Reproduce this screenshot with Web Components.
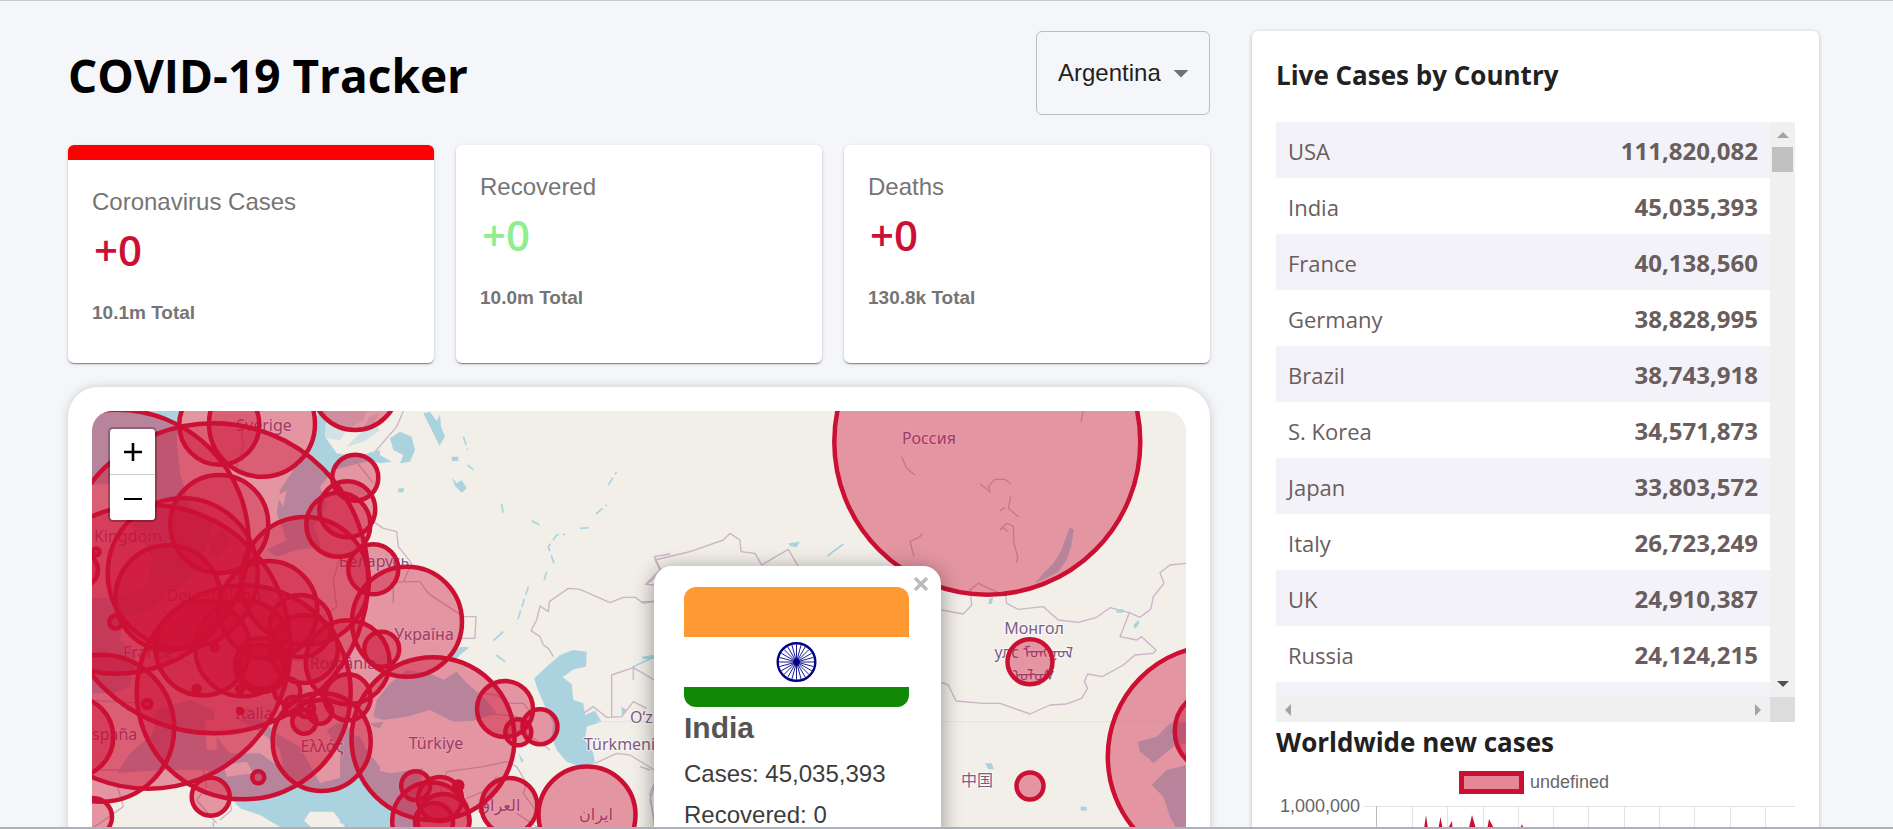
<!DOCTYPE html>
<html lang="en">
<head>
<meta charset="utf-8">
<title>COVID-19 Tracker</title>
<style>
  html, body { margin: 0; background: #f5f6fa; }
</style>
</head>
<body>
<covid-app></covid-app>

<script>
const define = (name, html, setup) => {
  const tpl = document.createElement('template');
  tpl.innerHTML = html;
  customElements.define(name, class extends HTMLElement {
    connectedCallback() {
      if (this.shadowRoot) return;
      this.attachShadow({ mode: 'open' }).append(tpl.content.cloneNode(true));
      if (setup) setup(this, this.shadowRoot);
    }
  });
};

/* Drop-down used to choose a country */
define('country-select', `
<style>
  :host { display: block; position: relative; }
  select { appearance: none; box-sizing: border-box; height: 84px; width: 174px; padding: 0 48px 0 21px;
    border: 1px solid #bcbdc1; border-radius: 6px; background: transparent; color: #1f1f20;
    font: 24px/36px "Liberation Sans", Arial, sans-serif; }
  svg { position: absolute; right: 21px; top: 39px; pointer-events: none; }
</style>
<select aria-label="Country"><option>Argentina</option></select>
<svg width="16" height="8" viewBox="0 0 16 8"><path d="M.5 0h15L8 7.5z" fill="#717276"/></svg>
`);

/* Summary card */
define('info-box', `
<style>
  :host { display: block; box-sizing: border-box; padding: 24px 24px 32px; border-radius: 6px; background: #fff;
    font-family: "Liberation Sans", Arial, sans-serif; color: #757575;
    box-shadow: 0 2px 1px -1px rgba(0,0,0,.3), 0 1px 2px rgba(0,0,0,.2), 0 1px 4px rgba(0,0,0,.1); }
  :host([selected]) { border-top: 15px solid #f00; }
  p, h2 { margin: 0; }
  .label { font-size: 24px; line-height: 36px; }
  h2 { padding-left: 2px; font: 600 42px/60px "Open Sans", sans-serif; color: #cc1034; }
  :host([good]) h2 { color: #90ee90; }
  .total { margin-top: 15px; font-size: 19px; line-height: 36px; font-weight: 700; }
</style>
<p class="label"><slot name="label"></slot></p>
<h2><slot></slot></h2>
<p class="total"><slot name="total"></slot></p>
`);

/* Country popup on the map */
define('map-popup', `
<style>
  :host { display: block; box-sizing: border-box; width: 287px; height: 400px; padding: 21px 32px 0 30px; background: #fff;
    border-radius: 18px; box-shadow: 0 4px 21px rgba(0,0,0,.4);
    font: 24px/41px "Liberation Sans", Arial, sans-serif; color: #3c3c3c; }
  .flag { display: block; width: 100%; height: 120px; border-radius: 12px; }
  h3 { margin: 0 0 4px; font-size: 30px; line-height: 42px; color: #555; }
  button { position: absolute; right: 8px; top: 6px; width: 24px; height: 24px; padding: 5px; border: 0; background: none; }
  button svg { display: block; }
</style>
<button aria-label="Close popup"><svg width="14" height="14" viewBox="0 0 14 14"><path d="M1 1l12 12M13 1L1 13" stroke="#bbb" stroke-width="3.4"/></svg></button>
<svg class="flag" viewBox="0 0 225 120" preserveAspectRatio="none">
  <path fill="#f93" d="M0 0h225v50H0z"/><path fill="#fff" d="M0 50h225v50H0z"/><path fill="#128807" d="M0 100h225v20H0z"/>
  <g transform="translate(112.500 75)" stroke="#008" fill="none">
    <circle r="18.800" stroke-width="2.400"/><circle r="3.200" fill="#008" stroke="none"/>
    <g id="spokes" stroke-width=".9"></g>
  </g>
</svg>
<h3><slot name="name"></slot></h3>
<slot></slot>
`, (host, root) => {
  let d = '';
  for (let i = 0; i < 24; i++) {
    const a = i * Math.PI / 12;
    d += `M0 0L${17.5 * Math.cos(a)} ${17.5 * Math.sin(a)}`;
  }
  root.querySelector('#spokes').innerHTML = `<path d="${d}"/>`;
});

/* Map with one circle per country: [x, y, radius] */
const CIRCLES = [
  [116.7,541.7,132],[213.3,578.3,155],[148.3,646.7,142],[243.7,692.3,107],[100.7,728.3,73.5],[73.3,737,40],
  [219.3,424.7,40],[262,423.7,53],[219.3,524,49],[182.7,573.3,75],[168,597.7,52.5],[305,581,64],[268.3,610,49],
  [243.3,648.3,48],[202.7,648.3,47],[347.7,662.3,42],[300.7,626,31],[304,649,34],[262,665,27],[261.7,667,22],
  [287.3,691,13],[304.3,721.7,12],[320,711.7,12],[306,709,8],[293,706,9],[347.7,697.3,23],[321.7,742,49],
  [258.3,777.3,6],[210.7,796.7,19],[93,817,19],[147.3,704,4],[196.7,689,3],[240,689,3],[240,711,2],[215,647.5,3],
  [115.7,622,6.5],[81,570,17],[96,552,3.5],[355,387,43],[355.3,477.7,23],[347.3,509.3,28],[338.3,524.7,32],
  [373.3,569.3,25],[407,621.7,55],[381.7,649.3,17.5],[433,738.7,81.5],[505,709,28],[518.3,732.3,13],[540,726.7,17.5],
  [509.3,806,28],[587,815,48.5],[415.7,785.7,14.5],[458.3,785.5,4],[440,799,22],[430.7,820.7,38.5],[434,822,19],
  [443.5,820,26],[987.3,441.7,153],[1030,661.7,22.5],[1030,786,13.5],[1219.3,756.7,111.5],[1215.7,731,41]
];
define('covid-map', `
<style>
  :host { display: block; padding: 24px; border-radius: 30px; background: #fff; box-shadow: 0 0 12px -2px rgba(0,0,0,.25); }
  .map { position: relative; height: 750px; border-radius: 20px; overflow: hidden; background: #f2efe9; }
  .map > svg { display: block; width: 100%; height: 100%; }
  .water { fill: #aad3df; } .land { fill: #f2efe9; }
  .river { fill: none; stroke: #aad3df; stroke-width: 5; stroke-linejoin: round; }
  .border { fill: none; stroke: #cbb4c6; stroke-width: 4; stroke-linejoin: round; }
  .names { font: 16px "Noto Sans", "DejaVu Sans", "Noto Sans CJK SC", sans-serif; fill: #7d5c86; text-anchor: middle;
    stroke: #fff; stroke-opacity: .6; stroke-width: 2; paint-order: stroke; }
  .names .from { text-anchor: start; }
  .cases { fill: #cc1034; fill-opacity: .4; stroke: #cc1034; stroke-width: 4.500; }
  .zoom { position: absolute; left: 16px; top: 16px; display: grid; border: 2px solid rgba(0,0,0,.25); border-radius: 5px; background: #fff; background-clip: padding-box; }
  .zoom button { display: grid; place-items: center; width: 45px; height: 45px; padding: 0; border: 0; background: none; }
  .zoom button:first-child { height: 46px; border-bottom: 1px solid #ccc; }
  ::slotted(map-popup) { position: absolute; left: 562px; top: 155px; }
</style>
<div class="map">
  <svg viewBox="92 411 1094 750" preserveAspectRatio="xMidYMin slice">
    <!-- western Europe -->
    <g transform="translate(80 400) scale(.33333)">
      <path class="water" d="M0 0H300L290 120 300 220 330 320 400 360 380 440 345 520 300 560 250 600 190 640 130 650 120 720 170 760 150 860 100 880 0 880z"/>
      <path class="land" d="M0 260L90 250 130 300 130 350 180 400 220 480 200 560 100 590 0 600z"/>
      <path class="water" d="M385 410L430 390 450 430 420 470 390 470zM560 450L620 420 590 340 600 270 660 180 700 120 715 30H740L735 110 770 160 830 170 900 150 900 175 760 210 720 260 740 320 700 380 720 440 650 450 590 470z"/>
      <path class="water" opacity=".45" d="M740 30H860L850 60 800 90 780 120 735 115z"/>
      <path class="land" d="M590 290L620 270 610 320zM570 350L580 330 575 390zM750 250L780 240 790 265 760 280z"/>
      <path class="water" d="M110 1120L150 1060 220 1000 230 930 330 900 400 930 410 1010 450 1060 540 1060 610 1110 600 1050 560 1010 480 960 500 920 590 1000 660 1040 720 1150 790 1130 780 1060 740 990 790 960 860 1050 900 1100V1287H800L760 1235 690 1235 672 1262 700 1287H610L540 1245 480 1225 450 1190 420 1150 380 1110 250 1110z"/>
      <path class="land" d="M375 960L410 960 410 1050 380 1050zM430 1095L500 1085 520 1120 440 1130z"/>
      <path class="border" d="M480 60L490 140 470 200M710 400L720 450 780 470 760 540 770 620 730 650M810 160L880 250M110 1150L130 1220 60 1270 30 1287M370 1110L380 1160 350 1200 410 1270M450 1200L455 1230 420 1260M800 1287V1265M400 1287L400 1265M240 620L300 690 290 760 340 800M420 560L540 560 600 620M640 780L760 790M170 1110L60 1110M20 900L200 910"/>
    </g>
    <!-- Russia, Black Sea, Caspian -->
    <g transform="translate(340 400) scale(.33333)">
      <path class="water" d="M150 115L180 95 215 110 225 150 210 185 180 190 190 165 160 150zM250 40L270 36 290 62 300 45 303 80 315 110 298 137 280 100zM335 232L350 250 365 240 380 265 365 278 345 258zM335 170L355 170 355 183 335 183zM175 265L193 265 190 277 175 277zM90 155L120 165 155 185 120 190 85 180z"/>
      <path class="water" d="M90 50L120 40 100 70 120 90 70 125 20 140 60 100z" opacity=".5"/>
      <path class="water" d="M100 950L110 900 150 850 200 810 270 820 310 840 350 815 380 850 440 900 470 940 400 962 340 965 270 930 200 950 130 960zM325 780L360 740 388 742 360 765 340 785zM90 970L130 965 120 985 100 980z"/>
      <path class="water" d="M660 765L700 750 740 755 738 800 700 808 668 832 695 852 700 900 730 910 735 945 765 932 785 965 740 980 735 1020 760 1060 765 1090 720 1100 680 1085 650 1050 635 1010 640 970 615 920 590 860 583 835 620 800z"/>
      <path class="water" d="M0 1000L60 1010 110 1110 150 1120 250 1105 240 1160 220 1287H90L60 1270H0z"/>
      <path class="water" d="M535 1060L550 1080 545 1090zM845 920L860 930 845 945z"/>
      <path class="river" d="M370 110L383 150M383 195L400 210M485 312L490 345M575 362L600 375M642 490L625 440 650 405 675 403M720 385L752 383M768 342L800 315M805 255L830 215M620 515L612 540M565 560L530 670" stroke-dasharray="26 12"/>
      <path class="river" d="M460 722L490 695M468 765L495 785M880 840L880 800 943 770"/>
      <path class="border" d="M190 33L170 80 105 155M100 365L130 385 170 395 175 440 215 490 190 545 150 550M190 545L240 545 265 580 310 610 370 650 408 650 405 715 360 715M640 770L625 745 610 735 600 710 573 692 590 660 600 618 625 635 628 605 685 565 720 568 810 608 850 592 885 592 910 610 945 603M945 555L920 553 965 515 943 470 990 462M815 952V825L880 803 943 840M730 940L760 920 800 952 845 950 880 905 920 925M765 1090L830 1060 870 1065 943 1110M420 880L470 885 500 910 550 910 575 940M440 940L530 950 560 1000 630 1050M320 1115L430 1100 500 1085 530 1100 560 1150 550 1180 590 1235M320 1115L300 1180M470 1130L440 1170 380 1195M943 1150L930 1180 945 1287M530 1240L600 1287M160 550V610"/>
    </g>
    <!-- Central and East Asia -->
    <g transform="translate(640 540) scale(.33333)">
      <path class="border" d="M0 185H45M15 135L60 90 45 60 150 35 250 0 270 -20 300 0 303 35 345 40 365 75 445 28 475 80M0 680L30 690M45 730L30 780 45 850M905 210L970 222 995 195 990 150 1015 130 1080 160M1097 165L1100 190 1135 208 1210 200 1255 240 1315 247 1370 232 1410 203 1468 218 1500 232 1532 208 1540 170 1572 130 1560 98 1590 75 1638 70M1468 218L1440 290 1490 300 1505 290 1548 330 1540 340 1485 345 1450 375 1387 410 1343 402 1333 425 1343 445 1325 475 1280 492 1230 495 1170 522 1080 490 1030 490 948 483 925 435 905 428"/>
      <path class="water" d="M1493 605L1550 590 1590 550 1638 545V610L1600 620 1540 670 1525 655 1500 635zM1638 675L1580 690 1535 735 1570 770 1590 830 1610 867V1000H1800V675z"/>
      <path class="water" d="M1290 -38L1302 -30 1293 20 1280 60 1255 95 1220 115 1185 130 1210 100 1240 70 1265 30 1275 0zM1048 175L1060 172 1055 192 1045 192zM1480 255L1495 240 1498 250 1485 268zM1430 208L1450 208 1448 218 1430 218zM1035 670L1055 670 1062 688 1045 688zM445 10L480 5 470 22 450 18zM1322 800H1340V812H1322zM5 350L40 345 42 357 10 357z"/>
      <path class="river" d="M562 48L610 12"/>
      <path d="M-130 545H1638" stroke="#e6e3dd" stroke-width="3"/>
      <path fill="none" stroke="#b9bccb" stroke-width="4" d="M1020 -168L1050 -145 1045 -160 1065 -182 1095 -182 1113 -168M1112 -130L1105 -95 1135 -70M1080 -88L1095 -98M1080 -30L1100 -50 1120 -42M1085 -40L1105 -25M1120 -42L1122 10 1133 50 1130 68M848 -20L840 -10 810 5 822 50M1323 -355L1330 -390 1355 -400M785 -250L800 -215 825 -195"/>
    </g>
    <g class="names">
      <text x="264" y="431">Sverige</text><text x="128" y="542">Kingdom</text><text x="374" y="567">Беларусь</text>
      <text x="424" y="640">Україна</text><text x="436" y="749">Türkiye</text><text x="148" y="658">France</text>
      <text x="214" y="601">Deutschland</text><text x="343" y="669">România</text><text x="254" y="719">Italia</text>
      <text x="322" y="752">Ελλάς</text><text class="from" x="92" y="740">spaña</text><text x="929" y="444">Россия</text>
      <text x="1034" y="634">Монгол</text><text x="1034" y="658">улс ᠮᠣᠩᠭᠤᠯ</text><text x="1034" y="681">ᠤᠯᠤᠰ</text>
      <text x="977" y="786">中国</text><text x="499" y="811">العراق</text><text x="596" y="820">ایران</text>
      <text class="from" x="630" y="723">Oʻz</text><text class="from" x="584" y="750">Türkmeni</text>
    </g>
    <g class="cases"></g>
  </svg>
  <slot></slot>
  <div class="zoom">
    <button aria-label="Zoom in"><svg width="18" height="18" viewBox="0 0 18 18"><path d="M0 9h18M9 0v18" stroke="#000" stroke-width="2.600"/></svg></button>
    <button aria-label="Zoom out"><svg width="18" height="18" viewBox="0 0 18 18"><path d="M0 10h18" stroke="#000" stroke-width="2.200"/></svg></button>
  </div>
</div>
`, (host, root) => {
  root.querySelector('.cases').innerHTML = CIRCLES.map(([x, y, r]) => `<circle cx="${x}" cy="${y}" r="${r}"/>`).join('');
});

const COUNTRIES = [['USA','111,820,082'],['India','45,035,393'],['France','40,138,560'],['Germany','38,828,995'],
  ['Brazil','38,743,918'],['S. Korea','34,571,873'],['Japan','33,803,572'],['Italy','26,723,249'],['UK','24,910,387'],
  ['Russia','24,124,215'],['','']];
define('cases-table', `
<style>
  :host { display: grid; grid-template: 575px 25px / 1fr 25px; }
  .rows { overflow: hidden; }
  table { width: 100%; border-collapse: collapse; color: #6a5d5d; font: 22px/54px "Open Sans", sans-serif; }
  tr { height: 56px; }
  tr:nth-child(odd) { background: #f3f2f8; }
  td { padding: 2px 12px 0; }
  td + td { text-align: right; font-size: 24px; font-weight: 700; }
  .bar { display: flex; justify-content: space-between; align-items: center; background: #f0f0f0; }
  .v { flex-direction: column; padding: 10px 0; }
  .v div { display: grid; justify-items: center; gap: 9px; }
  .v i { width: 21px; height: 25px; background: #c1c1c1; }
  .h { padding: 0 9px; }
  .corner { background: #dcdcdc; }
  svg { display: block; fill: #a3a3a3; }
</style>
<div class="rows"><table><tbody></tbody></table></div>
<div class="bar v"><div><svg width="12" height="6"><path d="M6 0l6 6H0z"/></svg><i></i></div><svg width="12" height="6"><path fill="#505050" d="M6 6L0 0h12z"/></svg></div>
<div class="bar h"><svg width="6" height="12"><path d="M0 6l6-6v12z"/></svg><svg width="6" height="12"><path d="M6 6L0 0v12z"/></svg></div>
<div class="corner"></div>
`, (host, root) => {
  root.querySelector('tbody').innerHTML = COUNTRIES.map(([n, c]) => `<tr><td>${n}</td><td>${c}</td></tr>`).join('');
});

/* Worldwide chart */
define('line-graph', `
<style>
  :host { display: block; font: 18px/24px "Liberation Sans", Arial, sans-serif; color: #666; }
  .legend { display: flex; justify-content: center; align-items: center; gap: 6px; height: 24px; margin-top: 8px; padding-right: 3px; }
  .legend i { box-sizing: border-box; width: 65px; height: 23px; border: 5px solid #cc1034; background: #e68799; }
  .plot { display: flex; gap: 4px; }
  .axis { width: 84px; text-align: right; }
  .plot svg { flex: 1; min-width: 0; height: 270px; margin-top: 12px; }
</style>
<div class="legend"><i></i><span>undefined</span></div>
<div class="plot">
  <div class="axis">1,000,000</div>
  <svg viewBox="0 0 431 270" preserveAspectRatio="none">
    <path fill="#cc1034" d="M59 30L62 9 65 30zM73 30L76.500 11 80 30zM80 30L88 15 89 30zM103 30L108 9 114 30zM122 30L125 13 134 30zM153 30L158 18 162 30z"/>
    <path stroke="#e3e3e3" stroke-width="1" d="M0 .5H431M48.500 0V270M83.500 0V270M119.500 0V270M154.500 0V270M189.500 0V270M224.500 0V270M260.500 0V270M295.500 0V270M330.500 0V270M366.500 0V270M401.500 0V270"/>
    <path stroke="#b9b9b9" d="M12.500 0V270"/>
  </svg>
</div>
`);

/* Page */
define('covid-app', `
<style>
  :host { display: grid; grid-template-columns: 1142fr 567fr; gap: 42px; align-items: start; box-sizing: border-box;
    height: 100vh; overflow: hidden; padding: 30px 74px 0 68px; border-top: 1px solid #c9cacf; border-bottom: 2px solid #adb0b7;
    background: #f5f6fa; font-family: "Open Sans", sans-serif; }
  header { display: flex; justify-content: space-between; align-items: center; }
  h1 { margin: 0; padding-top: 4px; font-size: 46px; line-height: 60px; color: #000; }
  .stats { display: grid; grid-template-columns: repeat(3, 1fr); gap: 22px; margin: 30px 0 24px; }
  aside { padding: 24px; border-radius: 6px; background: #fff; box-shadow: 0 1px 4px rgba(0,0,0,.25); }
  h2 { margin: 0; font-size: 26px; line-height: 40px; color: #212121; }
  cases-table { margin-top: 27px; }
</style>
<main>
  <header><h1>COVID-19 Tracker</h1><country-select></country-select></header>
  <section class="stats">
    <info-box selected><span slot="label">Coronavirus Cases</span>+0<span slot="total">10.1m Total</span></info-box>
    <info-box good><span slot="label">Recovered</span>+0<span slot="total">10.0m Total</span></info-box>
    <info-box><span slot="label">Deaths</span>+0<span slot="total">130.8k Total</span></info-box>
  </section>
  <covid-map>
    <map-popup><span slot="name">India</span><div>Cases: 45,035,393</div><div>Recovered: 0</div></map-popup>
  </covid-map>
</main>
<aside>
  <h2>Live Cases by Country</h2>
  <cases-table></cases-table>
  <h2>Worldwide new cases</h2>
  <line-graph></line-graph>
</aside>
`);
</script>
</body>
</html>
